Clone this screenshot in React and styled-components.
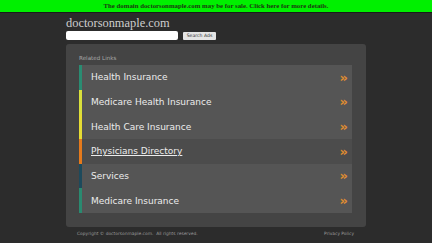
import styled, { createGlobalStyle } from 'styled-components';

const Global = createGlobalStyle`
  html, body {
    margin: 0;
    padding: 0;
    background: #2c2c2c;
  }
`;

const links = [
  { label: 'Health Insurance', color: '#2a8c72' },
  { label: 'Medicare Health Insurance', color: '#d9e03c' },
  { label: 'Health Care Insurance', color: '#e6dc34' },
  { label: 'Physicians Directory', color: '#e57a1c', active: true },
  { label: 'Services', color: '#1d4a5c' },
  { label: 'Medicare Insurance', color: '#2a8a70' },
];

export default function App () {
  return (
    <>
      <Global />
      <Banner>The domain doctorsonmaple.com may be for sale. Click here for more details.</Banner>
      <Wrap>
        <Domain>doctorsonmaple.com</Domain>
        <SearchRow>
          <SearchInput type='text' />
          <SearchBtn>Search Ads</SearchBtn>
        </SearchRow>
        <Panel>
          <PanelTitle>Related Links</PanelTitle>
          <List>
            {links.map(l => (
              <LinkRow key={l.label} bar={l.color} active={l.active}>
                <LinkText active={l.active}>{l.label}</LinkText>
                <Chevron>»</Chevron>
              </LinkRow>
            ))}
          </List>
        </Panel>
        <Footer>
          <span>Copyright © doctorsonmaple.com.&nbsp; All rights reserved.</span>
          <span>Privacy Policy</span>
        </Footer>
      </Wrap>
    </>
  )
}

const Banner = styled.div`
  height: 12px;
  background-color: #00f000;
  border-bottom: 1px solid #1a1a1a;
  color: #1b3a10;
  font-family: "Liberation Serif", serif;
  font-weight: bold;
  font-size: 6.8px;
  line-height: 12px;
  text-align: center;
`;

const Wrap = styled.div`
  width: 300px;
  margin: 0 auto;
`;

const Domain = styled.div`
  padding-top: 2px;
  height: 16px;
  font-family: "Liberation Serif", serif;
  font-size: 12.4px;
  line-height: 16px;
  color: #cfcfcf;
`;

const SearchRow = styled.div`
  display: flex;
  align-items: center;
  gap: 5px;
  height: 9px;
  margin-bottom: 4px;
`;

const SearchInput = styled.input`
  box-sizing: border-box;
  width: 112px;
  height: 9px;
  border: none;
  border-radius: 2px;
  background: #ffffff;
  padding: 0;
  outline: none;
`;

const SearchBtn = styled.button`
  box-sizing: border-box;
  width: 33px;
  height: 8px;
  padding: 0;
  border: none;
  border-radius: 1px;
  background: #e4e4e4;
  color: #333;
  font-family: "DejaVu Sans", sans-serif;
  font-size: 4.6px;
  line-height: 8px;
`;

const Panel = styled.div`
  background-color: #444444;
  border-radius: 3px;
  padding: 10px 14px 14px 13px;
`;

const PanelTitle = styled.div`
  font-family: "DejaVu Sans", sans-serif;
  font-size: 5.6px;
  line-height: 8px;
  color: #a8a8a8;
  margin-bottom: 3px;
`;

const List = styled.div`
  display: flex;
  flex-direction: column;
`;

const LinkRow = styled.div`
  display: flex;
  align-items: center;
  justify-content: space-between;
  height: 24.67px;
  box-sizing: border-box;
  padding: 0 4px 0 9px;
  border-left: 3px solid ${props => props.bar};
  background-color: ${props => props.active ? '#4c4c4c' : '#555555'};
`;

const LinkText = styled.span`
  font-family: "DejaVu Sans", sans-serif;
  font-size: 9px;
  color: #ececec;
  text-decoration: ${props => props.active ? 'underline' : 'none'};
`;

const Chevron = styled.span`
  font-family: "DejaVu Sans", sans-serif;
  font-weight: bold;
  font-size: 13px;
  line-height: 1;
  color: #e08d30;
`;

const Footer = styled.div`
  display: flex;
  justify-content: space-between;
  padding: 4px 12px 0 11px;
  font-family: "DejaVu Sans", sans-serif;
  font-size: 4.4px;
  color: #9a9a9a;
`;
